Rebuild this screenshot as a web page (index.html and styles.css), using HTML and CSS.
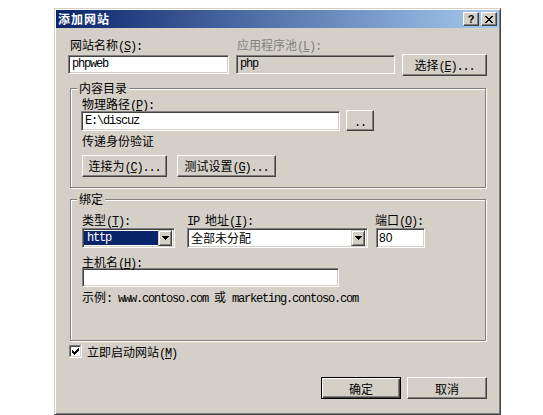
FILE: index.html
```html
<!DOCTYPE html>
<html lang="zh-CN">
<head>
<meta charset="utf-8">
<title>添加网站</title>
<link rel="stylesheet" href="styles.css">
</head>
<body>
<div class="dialog">
  <div class="titlebar">
    <span class="title">添加网站</span>
    <div class="cbtns">
      <span class="cbtn help">?</span>
      <span class="cbtn close"><svg width="8" height="7" viewBox="0 0 8 7"><path d="M0 0h2v1H0zM6 0h2v1H6zM1 1h2v1H1zM5 1h2v1H5zM2 2h4v1H2zM3 3h2v1H3zM2 4h4v1H2zM1 5h2v1H1zM5 5h2v1H5zM0 6h2v1H0zM6 6h2v1H6z" fill="#000"/></svg></span>
    </div>
  </div>
  <div class="panel">
    <div class="site-grid">
      <div class="lbl l-site">网站名称<span class="mono">(<u>S</u>):</span></div>
      <div class="lbl l-pool disabled">应用程序池<span class="mono">(<u>L</u>):</span></div>
      <div></div>
      <div class="edit mono">phpweb</div>
      <div class="edit mono readonly">php</div>
      <button class="btn btn-select">选择<span class="mono">(<u>E</u>)...</span></button>
    </div>

    <div class="group group-content">
      <div class="group-title">内容目录</div>
      <div class="lbl l-path">物理路径<span class="mono">(<u>P</u>):</span></div>
      <div class="path-row">
        <div class="edit mono path">E:\discuz</div>
        <button class="btn btn-browse"><span class="mono">..</span></button>
      </div>
      <div class="lbl l-auth">传递身份验证</div>
      <div class="btn-row">
        <button class="btn btn-connect">连接为<span class="mono">(<u>C</u>)...</span></button>
        <button class="btn btn-test">测试设置<span class="mono">(<u>G</u>)...</span></button>
      </div>
    </div>

    <div class="group group-binding">
      <div class="group-title">绑定</div>
      <div class="bind-row">
        <div class="col col-type">
          <div class="lbl">类型<span class="mono">(<u>T</u>):</span></div>
          <div class="combo">
            <span class="combo-val selected mono">http</span>
            <span class="combo-arrow"><svg width="7" height="4" viewBox="0 0 7 4"><path d="M0 0h7v1H0zM1 1h5v1H1zM2 2h3v1H2zM3 3h1v1H3z" fill="#000"/></svg></span>
          </div>
        </div>
        <div class="col col-ip">
          <div class="lbl"><span class="mono">IP </span>地址<span class="mono">(<u>I</u>):</span></div>
          <div class="combo">
            <span class="combo-val">全部未分配</span>
            <span class="combo-arrow"><svg width="7" height="4" viewBox="0 0 7 4"><path d="M0 0h7v1H0zM1 1h5v1H1zM2 2h3v1H2zM3 3h1v1H3z" fill="#000"/></svg></span>
          </div>
        </div>
        <div class="col col-port">
          <div class="lbl">端口<span class="mono">(<u>O</u>):</span></div>
          <div class="edit port">80</div>
        </div>
      </div>
      <div class="lbl l-host">主机名<span class="mono">(<u>H</u>):</span></div>
      <div class="edit host"></div>
      <div class="lbl l-example">示例<span class="mono">: www.contoso.com </span>或<span class="mono"> marketing.contoso.com</span></div>
    </div>

    <div class="check-row">
      <svg class="checkbox" width="13" height="13" viewBox="0 0 13 13">
        <path d="M0 0h12v1H1v11H0z" fill="#808080"/>
        <path d="M1 1h10v1H2v9H1z" fill="#404040"/>
        <path d="M12 0h1v13H0v-1h12z" fill="#fff"/>
        <path d="M11 1h1v11H1v-1h10z" fill="#D4D0C8"/>
        <rect x="2" y="2" width="9" height="9" fill="#fff"/>
        <path d="M3 5h1v3H3zM4 6h1v3H4zM5 7h1v3H5zM6 6h1v3H6zM7 5h1v3H7zM8 4h1v3H8zM9 3h1v3H9z" fill="#000"/>
      </svg>
      <span class="lbl">立即启动网站<span class="mono">(<u>M</u>)</span></span>
    </div>

    <div class="footer">
      <button class="btn btn-dlg default">确定</button>
      <button class="btn btn-dlg">取消</button>
    </div>
  </div>
</div>
</body>
</html>
```
FILE: styles.css
```css
* { box-sizing: border-box; }
html, body { margin: 0; padding: 0; background: #fff; }
body {
  font-family: "Noto Sans CJK SC", "Noto Sans", sans-serif;
  font-size: 12px;
  line-height: 13px;
  color: #000;
}
u { text-decoration: underline; text-underline-offset: 1px; }

.mono {
  font-family: "Liberation Mono", "DejaVu Sans Mono", monospace;
  font-size: 12px;
  letter-spacing: -1.2px;
  white-space: pre;
}
.lbl .mono, .btn .mono { line-height: 10px; }

.dialog {
  margin: 8px 0 0 54px;
  width: 447px;
  height: 407px;
  background: #D4D0C8;
  border: 1px solid;
  border-color: #D4D0C8 #404040 #404040 #D4D0C8;
  box-shadow: inset 1px 1px #fff, inset -1px -1px #808080;
  padding: 1px;
  display: flex;
  flex-direction: column;
}

.titlebar {
  height: 18px;
  flex: none;
  display: flex;
  align-items: center;
  padding: 0 2px;
  background: linear-gradient(to right, #0A246A, #A6CAF0);
}
.title {
  flex: 1;
  color: #fff;
  font-weight: bold;
  letter-spacing: 1px;
  line-height: 18px;
}
.cbtns { display: flex; gap: 2px; }
.cbtn {
  width: 16px;
  height: 14px;
  background: #D4D0C8;
  border: 1px solid;
  border-color: #fff #404040 #404040 #fff;
  box-shadow: inset -1px -1px #808080;
  display: flex;
  align-items: center;
  justify-content: center;
}
.help {
  font-family: "Liberation Sans", sans-serif;
  font-weight: bold;
  font-size: 11px;
  line-height: 12px;
}

.panel {
  flex: 1;
  padding: 10px 12px 0 12px;
}

.lbl { height: 13px; line-height: 13px; white-space: nowrap; }
.disabled { color: #808080; }

.edit {
  height: 19px;
  background: #fff;
  border: 1px solid;
  border-color: #808080 #fff #fff #808080;
  box-shadow: inset 1px 1px #404040, inset -1px -1px #D4D0C8;
  padding: 0 3px;
  line-height: 17px;
  white-space: nowrap;
}
.edit.readonly { background: #D4D0C8; }

.btn {
  margin: 0;
  padding: 0;
  background: #D4D0C8;
  border: 1px solid;
  border-color: #fff #404040 #404040 #fff;
  box-shadow: inset -1px -1px #808080;
  font: inherit;
  color: #000;
  height: 22px;
  line-height: 13px;
  text-align: center;
  white-space: nowrap;
}
.btn.default {
  border-color: #000;
  box-shadow: inset 1px 1px #fff, inset -1px -1px #404040, inset -2px -2px #808080;
}

/* top grid */
.site-grid {
  display: grid;
  grid-template-columns: 161px 159px 85px;
  grid-template-rows: 13px 21px;
  column-gap: 7px;
  row-gap: 4px;
}
.l-site { padding-left: 2px; }
.l-pool { padding-left: 1px; }
.site-grid .edit { align-self: start; }
.btn-select { margin-top: -1px; }

/* group boxes */
.group {
  margin-left: 2px;
  width: 416px;
  border: 1px solid #808080;
  box-shadow: inset 1px 1px #fff, 1px 1px #fff;
  padding: 0 0 0 11px;
}
.group-title {
  width: fit-content;
  height: 12px;
  margin: -7px 0 0 -5px;
  padding: 0 2px;
  background: #D4D0C8;
  line-height: 12px;
  white-space: nowrap;
}
.group-content { margin-top: 12px; padding-bottom: 10px; }
.l-path { margin-top: 3px; }
.path-row { display: flex; align-items: flex-end; gap: 6px; margin-left: -1px; height: 21px; }
.path-row .path { width: 259px; height: 20px; line-height: 18px; }
.btn-browse { width: 28px; height: 21px; }
.l-auth { margin-top: 3px; }
.btn-row { display: flex; gap: 10px; margin-top: 8px; }
.btn-connect { width: 85px; }
.btn-test { width: 99px; }

.group-binding { margin-top: 11px; padding-bottom: 37px; }
.bind-row { display: flex; margin-top: 8px; }
.col { display: flex; flex-direction: column; gap: 2px; }
.col-type { width: 93px; }
.col-ip { width: 181px; margin-left: 12px; }
.col-port { margin-left: 7px; }
.port {
  margin-left: 1px;
  width: 49px;
  height: 20px;
  font-family: "Liberation Sans", sans-serif;
  font-size: 12px;
  line-height: 18px;
  padding-left: 2px;
}

.combo {
  height: 20px;
  display: flex;
  background: #fff;
  border: 1px solid;
  border-color: #808080 #fff #fff #808080;
  box-shadow: inset 1px 1px #404040, inset -1px -1px #D4D0C8;
  padding: 2px 2px 2px 1px;
}
.combo-val {
  flex: 1;
  line-height: 14px;
  padding-left: 2px;
  white-space: nowrap;
}
.combo-val.selected { background: #0A246A; color: #fff; padding-left: 3px; }
.combo-arrow {
  width: 14px;
  background: #D4D0C8;
  border: 1px solid;
  border-color: #D4D0C8 #404040 #404040 #D4D0C8;
  box-shadow: inset 1px 1px #fff, inset -1px -1px #808080;
  display: flex;
  align-items: center;
  justify-content: center;
  margin-top: -1px;
  margin-bottom: -1px;
}

.l-host { margin-top: 7px; }
.host { width: 257px; }
.l-example { margin-top: 3px; }

.check-row {
  display: flex;
  align-items: center;
  gap: 5px;
  margin: 4px 0 0 1px;
  height: 13px;
}
.checkbox { display: block; flex: none; }

.footer {
  display: flex;
  justify-content: flex-end;
  gap: 6px;
  margin-top: 19px;
}
.btn-dlg { width: 80px; }
```
